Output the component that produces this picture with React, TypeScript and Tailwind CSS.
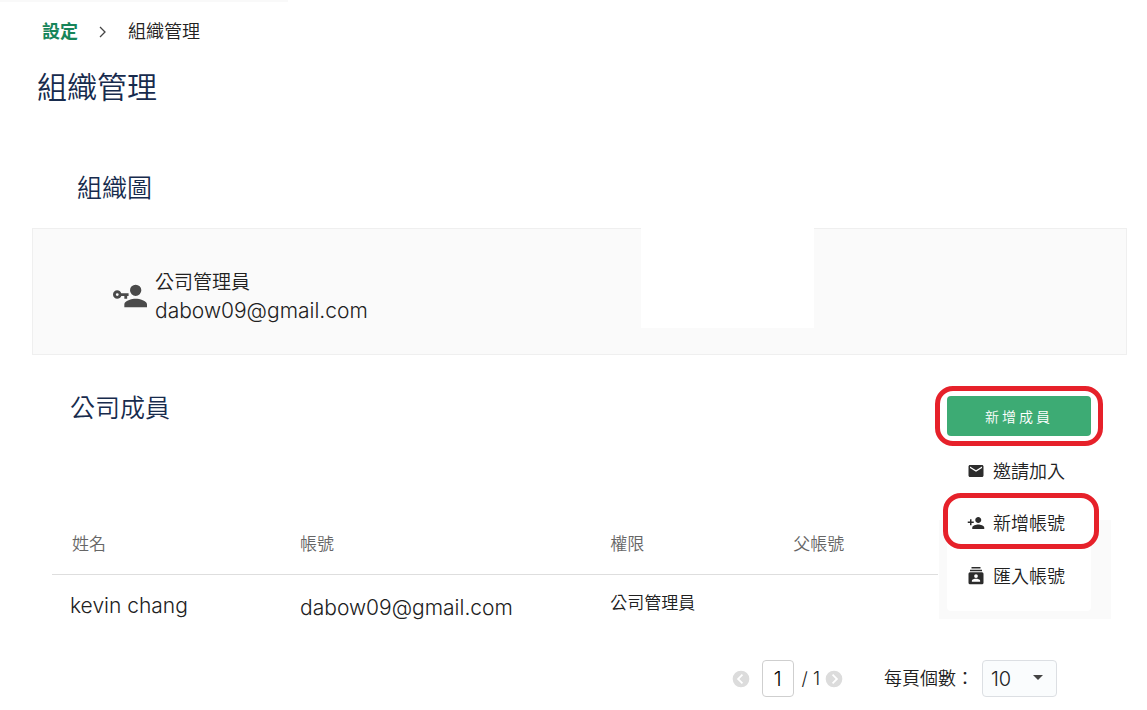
import { useState } from "react";

const base = "font-['Inter','Noto_Sans_CJK_TC',sans-serif] font-[350]";

function Icon({ d, className, box = "0 0 24 24" }: { d: string; className: string; box?: string }) {
  return (
    <svg viewBox={box} className={className} fill="currentColor" aria-hidden="true">
      <path fillRule="evenodd" d={d} />
    </svg>
  );
}

const icons = {
  accountKey:
    "M11 10v2h-1v2H8v-2H5.83C5.42 13.17 4.31 14 3 14a3 3 0 1 1 0-6c1.31 0 2.42.83 2.83 2H11M3 10a1 1 0 1 0 0 2 1 1 0 0 0 0-2m13 4c2.67 0 8 1.34 8 4v2H8v-2c0-2.66 5.33-4 8-4m0-2a4 4 0 1 1 0-8 4 4 0 0 1 0 8Z",
  mail: "M20 4H4c-1.1 0-2 .9-2 2v12c0 1.1.9 2 2 2h16c1.1 0 2-.9 2-2V6c0-1.1-.9-2-2-2zm0 4-8 5-8-5V6l8 5 8-5v2z",
  personAdd:
    "M15 12c2.21 0 4-1.79 4-4s-1.79-4-4-4-4 1.79-4 4 1.79 4 4 4zm-9-2V7H4v3H1v2h3v3h2v-3h3v-2H6zm9 4c-2.67 0-8 1.34-8 4v2h16v-2c0-2.66-5.33-4-8-4z",
  contacts:
    "M6 0h12v2H6zM4 3.500h16v2H4zM4 7h16a2 2 0 0 1 2 2v12a2 2 0 0 1-2 2H4a2 2 0 0 1-2-2V9a2 2 0 0 1 2-2zm8 2.500a2.500 2.500 0 1 0 0 5 2.500 2.500 0 0 0 0-5zM6.500 19.500h11V18c0-1.700-3.500-2.500-5.500-2.500S6.500 16.300 6.500 18z",
  prev: "M12 2a10 10 0 1 0 0 20 10 10 0 0 0 0-20zm2.500 14.500L13 18l-6-6 6-6 1.500 1.500L10 12z",
  next: "M12 2a10 10 0 1 1 0 20 10 10 0 0 1 0-20zm-2.500 14.500L11 18l6-6-6-6-1.500 1.500L14 12z",
};

const members = [{ name: "kevin chang", account: "dabow09@gmail.com", role: "公司管理員", parent: "" }];

export default function App() {
  const [page, setPage] = useState("1");
  return (
    <main className={`min-h-screen bg-white text-[#212121] ${base}`}>
      <div className="h-0.5 w-72 bg-[#f9f9f9]" />
      <nav aria-label="breadcrumb" className="flex items-center pt-[17px] pl-[42px] text-[18px] leading-[26px]">
        <a href="#settings" className="font-bold text-[#17855a]">設定</a>
        <svg viewBox="0 0 10 12" className="mx-5 h-3 w-[10px]" fill="none" stroke="#444" strokeWidth="1.3" aria-hidden="true">
          <path d="M2 1l5 5-5 5" />
        </svg>
        <span>組織管理</span>
      </nav>
      <h1 className="mt-5 pl-[37px] text-[30px] leading-[44px] text-[#172b4d]">組織管理</h1>

      <section className="mt-[61px] pr-5 pl-8">
        <h2 className="pl-[45px] text-[25px] leading-9 text-[#172b4d]">組織圖</h2>
        <div className="relative mt-[22px] flex h-[127px] items-center gap-2 border border-[#efefef] bg-[#fafafa] pt-2 pl-20">
          <Icon d={icons.accountKey} className="size-[34px] text-[#4a4a4a]" />
          <div className="pt-0.5">
            <p className="text-[19px] leading-7">公司管理員</p>
            <p className="text-[21px] leading-7 font-light">dabow09@gmail.com</p>
          </div>
          <div className="absolute -top-px right-[312px] h-[100px] w-[173px] bg-white" />
        </div>
      </section>

      <section className="pr-[44px] pl-[52px]">
        <div className="flex items-start justify-between pt-[31px]">
          <h2 className="pt-1 pl-[18px] text-[25px] leading-9 text-[#172b4d]">公司成員</h2>
          <div className="relative">
            <div className="flex rounded-[18px] border-5 border-[#e6212a] px-[7px] py-[5px]">
              <button type="button" aria-haspopup="menu" className="h-10 w-[144px] rounded bg-[#3dab74] text-[14px] tracking-[3px] text-white">
                新增成員
              </button>
            </div>
            <div className="absolute top-[134px] right-[-8px] h-[99px] w-[172px] bg-[#fafafa]" />
            <ul className="absolute top-[60px] right-[12px] w-[144px] rounded bg-white pb-2 text-[18px]">
              <li>
                <button type="button" className="flex h-[50px] w-full items-center gap-2 pl-5 text-left">
                  <Icon d={icons.mail} className="size-[18px] text-[#2c2c2c]" />
                  邀請加入
                </button>
              </li>
              <li className="-mt-[3px] -mr-2 -ml-1 rounded-[18px] border-5 border-[#e6212a] bg-white">
                <button type="button" className="flex h-[46px] w-full items-center gap-2 pt-1 pl-[19px] text-left">
                  <Icon d={icons.personAdd} className="size-[18px] text-[#2c2c2c]" />
                  新增帳號
                </button>
              </li>
              <li>
                <button type="button" className="flex h-[54px] w-full items-center gap-2 pl-5 text-left">
                  <Icon d={icons.contacts} className="size-[18px] text-[#2c2c2c]" />
                  匯入帳號
                </button>
              </li>
            </ul>
          </div>
        </div>

        <div className="pt-[66px] pr-[165px]">
          <table className="w-full table-fixed text-left">
            <colgroup>
              <col className="w-[28%]" />
              <col className="w-[35%]" />
              <col className="w-[183px]" />
              <col />
            </colgroup>
            <thead>
              <tr className="h-[62px] border-b border-[#dedede] text-[17px] text-[#666]">
                <th className="pt-1 pl-5 font-[350]">姓名</th>
                <th className="pt-1 font-[350]">帳號</th>
                <th className="pt-1 font-[350]">權限</th>
                <th className="pt-1 font-[350]">父帳號</th>
              </tr>
            </thead>
            <tbody>
              {members.map((m) => (
                <tr key={m.account} className="h-[62px] text-[21px]">
                  <td className="pl-[18px] font-light">{m.name}</td>
                  <td className="pt-1 font-light">{m.account}</td>
                  <td className="pb-1 text-[17px]">{m.role}</td>
                  <td>{m.parent}</td>
                </tr>
              ))}
            </tbody>
          </table>
        </div>
      </section>

      <footer className="flex items-center justify-end pt-6 pr-[90px] pb-3 text-[18px]">
        <button type="button" aria-label="上一頁" className="text-[#dcdcdc]">
          <Icon d={icons.prev} className="size-5" />
        </button>
        <input
          aria-label="頁碼"
          value={page}
          onChange={(e) => setPage(e.target.value)}
          className="mr-2 ml-[11px] h-[37px] w-8 rounded border border-[#cfcfcf] text-center text-[20px] text-black"
        />
        <span className="font-light">/ 1</span>
        <button type="button" aria-label="下一頁" className="ml-1 text-[#dcdcdc]">
          <Icon d={icons.next} className="size-5" />
        </button>
        <label htmlFor="per-page" className="ml-10">每頁個數：</label>
        <div className="relative ml-2">
          <select id="per-page" className="h-[37px] w-[75px] appearance-none rounded border border-[#dcdfe3] bg-[#fafcfd] pl-2 text-[20px] font-light">
            <option>10</option>
            <option>20</option>
          </select>
          <svg viewBox="0 0 10 5" className="pointer-events-none absolute top-[15px] right-[14px] h-[5px] w-[10px]" fill="#444" aria-hidden="true">
            <path d="M0 0h10L5 5z" />
          </svg>
        </div>
      </footer>
    </main>
  );
}
